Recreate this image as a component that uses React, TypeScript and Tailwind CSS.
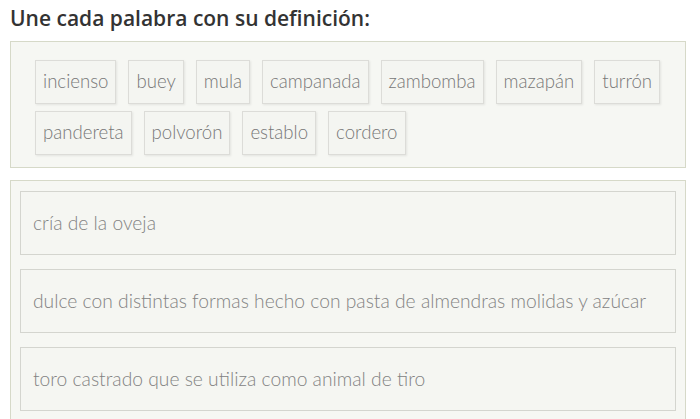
import React from 'react';

const words = [
  'incienso',
  'buey',
  'mula',
  'campanada',
  'zambomba',
  'mazapán',
  'turrón',
  'pandereta',
  'polvorón',
  'establo',
  'cordero',
];

const definitions = [
  'cría de la oveja',
  'dulce con distintas formas hecho con pasta de almendras molidas y azúcar',
  'toro castrado que se utiliza como animal de tiro',
];

export default function App() {
  return (
    <div className="w-[700px] h-[419px] overflow-hidden bg-white pl-[10px] pr-[14px] font-['Lato','Open_Sans',sans-serif]">
      <h2 className="pt-[4px] h-[41px] font-['Open_Sans',sans-serif] text-[21px] font-semibold leading-[29px] text-[#333333]">
        Une cada palabra con su definición:
      </h2>

      {/* Word bank */}
      <div className="border border-[#d6d9c8] bg-[#f6f7f3] pt-[18px] pb-[12px] pl-[24px] pr-[20px]">
        <div className="flex flex-wrap gap-x-[12px] gap-y-[7px]">
          {words.map((w) => (
            <div
              key={w}
              className="h-[44px] px-[7px] flex items-center border border-[#dcdcd8] bg-[#f4f5f1] shadow-[1px_1px_2px_rgba(0,0,0,0.08)] text-[18.6px] font-light text-[#777777]"
            >
              {w}
            </div>
          ))}
        </div>
      </div>

      {/* Definitions */}
      <div className="mt-[12px] border border-[#d6d9c8] bg-[#f6f7f3] pt-[10px] pb-[20px] px-[9px] flex flex-col gap-[14px]">
        {definitions.map((d) => (
          <div
            key={d}
            className="h-[64px] shrink-0 flex items-center border border-[#d4d5cf] bg-[#f5f6f2] pl-[12px] text-[19.25px] font-light text-[#838383]"
          >
            {d}
          </div>
        ))}
      </div>
    </div>
  );
}
